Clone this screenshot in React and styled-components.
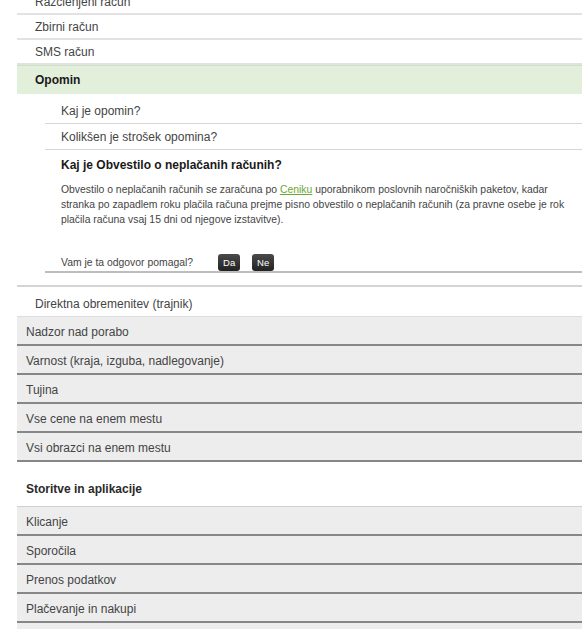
import React from 'react';
import styled, { createGlobalStyle } from 'styled-components';

const GlobalStyle = createGlobalStyle`
  body {
    margin: 0;
    background: #fff;
    font-family: "Liberation Sans", Arial, sans-serif;
    color: #444;
  }
`;

const Page = styled.div`
  width: 565px;
  margin: -10px 0 0 17px;
  overflow: hidden;
`;

const PlainRow = styled.div`
  height: 23px;
  display: flex;
  align-items: center;
  padding-left: 18px;
  font-size: 12px;
  color: #444;
  border-bottom: 2px solid #e2e2e2;
`;

const ActiveRow = styled.div`
  height: 28px;
  display: flex;
  align-items: center;
  padding-left: 18px;
  font-size: 12px;
  font-weight: bold;
  color: #1a1a1a;
  background: #e2efda;
  border-top: 1px solid #cfe1c5;
`;

const Expanded = styled.div`
  padding: 4px 0 12px 28px;
  border-bottom: 2px solid #d4d4d4;
`;

const Question = styled.div`
  padding: 6px 0 4px 16px;
  line-height: 15px;
  font-size: 12px;
  color: #444;
  border-bottom: 1px solid #d6d6d6;
`;

const Answer = styled.div`
  padding: 7px 10px 0 16px;
`;

const AnswerTitle = styled.h3`
  margin: 0 0 9px;
  font-size: 12px;
  line-height: 16px;
  font-weight: bold;
  color: #1a1a1a;
`;

const AnswerText = styled.p`
  margin: 0;
  font-size: 10.4px;
  line-height: 15px;
  color: #444;
`;

const Link = styled.a`
  color: #6aa934;
  text-decoration: underline;
`;

const Feedback = styled.div`
  display: flex;
  align-items: center;
  height: 18px;
  margin-top: 26px;
  padding-left: 16px;
  font-size: 10.4px;
  color: #444;
  border-bottom: 2px solid #bdbdbd;
`;

const FeedbackLabel = styled.span`
  margin-right: 25px;
`;

const VoteButton = styled.button`
  height: 17px;
  min-width: 22px;
  padding: 0 4px;
  margin-right: 12px;
  border: 0;
  border-radius: 3px;
  background: linear-gradient(#4a4a4a, #222);
  color: #fff;
  font-family: inherit;
  font-size: 9.5px;
  line-height: 17px;
`;

const SubRow = styled.div`
  height: 24px;
  display: flex;
  align-items: center;
  padding: 5px 0 0 18px;
  font-size: 12px;
  color: #444;
  border-bottom: 1px solid #dcdcdc;
`;

const GreyRow = styled.div`
  height: 24px;
  display: flex;
  align-items: center;
  padding: 3px 0 0 9px;
  font-size: 12px;
  color: #444;
  background: #ededee;
  border-bottom: 2px solid #878787;
`;

const SectionTitle = styled.div`
  height: 25px;
  padding: 19px 0 0 9px;
  line-height: 16px;
  font-size: 12px;
  font-weight: bold;
  color: #2a2a2a;
  border-bottom: 1px solid #d0d0d0;
`;

const billing = ['Razčlenjeni račun', 'Zbirni račun', 'SMS račun'];
const topics = [
  'Nadzor nad porabo',
  'Varnost (kraja, izguba, nadlegovanje)',
  'Tujina',
  'Vse cene na enem mestu',
  'Vsi obrazci na enem mestu',
];
const services = ['Klicanje', 'Sporočila', 'Prenos podatkov', 'Plačevanje in nakupi', 'Aplikacije'];

export default function App() {
  return (
    <>
      <GlobalStyle />
      <Page>
        {billing.map(b => <PlainRow key={b}>{b}</PlainRow>)}
        <ActiveRow>Opomin</ActiveRow>
        <Expanded>
          <Question>Kaj je opomin?</Question>
          <Question>Kolikšen je strošek opomina?</Question>
          <Answer>
            <AnswerTitle>Kaj je Obvestilo o neplačanih računih?</AnswerTitle>
            <AnswerText>
              Obvestilo o neplačanih računih se zaračuna po <Link href="#">Ceniku</Link> uporabnikom
              poslovnih naročniških paketov, kadar stranka po zapadlem roku plačila računa prejme
              pisno obvestilo o neplačanih računih (za pravne osebe je rok plačila računa vsaj 15 dni
              od njegove izstavitve).
            </AnswerText>
          </Answer>
          <Feedback>
            <FeedbackLabel>Vam je ta odgovor pomagal?</FeedbackLabel>
            <VoteButton>Da</VoteButton>
            <VoteButton>Ne</VoteButton>
          </Feedback>
        </Expanded>
        <SubRow>Direktna obremenitev (trajnik)</SubRow>
        {topics.map(t => <GreyRow key={t}>{t}</GreyRow>)}
        <SectionTitle>Storitve in aplikacije</SectionTitle>
        {services.map(s => <GreyRow key={s}>{s}</GreyRow>)}
      </Page>
    </>
  );
}
